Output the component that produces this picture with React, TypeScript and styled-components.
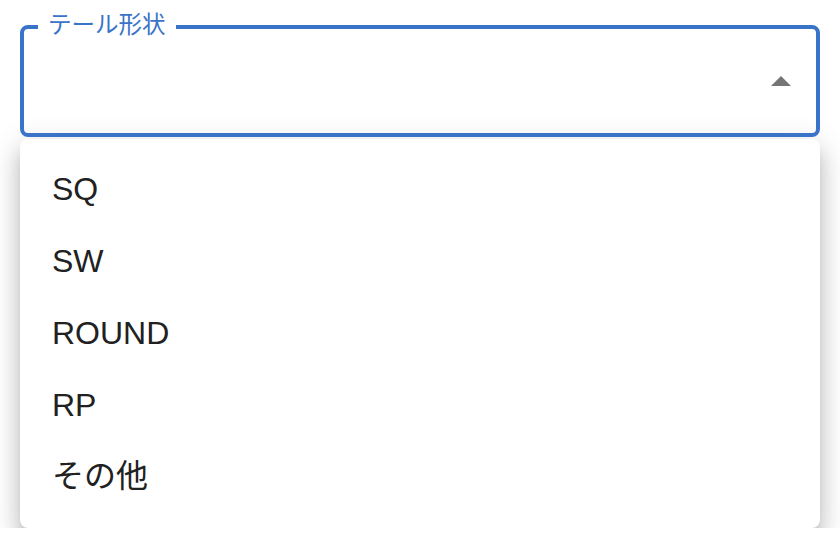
import React, { useState } from 'react';
import styled, { createGlobalStyle } from 'styled-components';

const GlobalStyle = createGlobalStyle`
  html, body {
    margin: 0;
    padding: 0;
    background: #fff;
  }
  body {
    font-family: "Liberation Sans", "Noto Sans CJK JP", sans-serif;
  }
`;

const Page = styled.div`
  padding: 25px 20px 0;
  width: 840px;
  box-sizing: border-box;
`;

const Field = styled.div`
  position: relative;
  height: 112px;
  box-sizing: border-box;
  border: 4px solid #3a74c8;
  border-radius: 8px;
  display: flex;
  align-items: center;
  justify-content: flex-end;
  padding-right: 25px;
`;

const FloatingLabel = styled.span`
  position: absolute;
  top: -18px;
  left: 14px;
  padding: 0 10px;
  background: #fff;
  color: #3a74c8;
  font-family: "Noto Sans CJK JP", "Liberation Sans", sans-serif;
  font-size: 23.5px;
  line-height: 24px;
`;

const Arrow = styled.span<{ $open: boolean }>`
  width: 0;
  height: 0;
  border-left: 10px solid transparent;
  border-right: 10px solid transparent;
  border-bottom: ${p => (p.$open ? '10px solid #757575' : 'none')};
  border-top: ${p => (p.$open ? 'none' : '10px solid #757575')};
`;

const Menu = styled.ul`
  list-style: none;
  margin: 2px 0 0;
  padding: 14px 0 15px;
  background: #fff;
  border-radius: 8px;
  box-shadow: 0 10px 10px -6px rgba(0, 0, 0, 0.22),
    0 16px 20px 2px rgba(0, 0, 0, 0.14),
    0 6px 28px 4px rgba(0, 0, 0, 0.12);
`;

const Item = styled.li<{ $jp?: boolean }>`
  height: 72px;
  line-height: ${p => (p.$jp ? '64px' : '72px')};
  padding: 0 32px;
  font-size: 32px;
  color: #212121;
  font-family: ${p =>
    p.$jp
      ? '"Noto Sans CJK JP", "Liberation Sans", sans-serif'
      : '"Liberation Sans", "Noto Sans CJK JP", sans-serif'};
  cursor: pointer;
`;

const options = ['SQ', 'SW', 'ROUND', 'RP', 'その他'];

export default function App() {
  const [open, setOpen] = useState(true);
  return (
    <Page>
      <GlobalStyle />
      <Field onClick={() => setOpen(!open)}>
        <FloatingLabel>テール形状</FloatingLabel>
        <Arrow $open={open} />
      </Field>
      {open && (
        <Menu>
          {options.map(o => (
            <Item key={o} $jp={o === 'その他'}>
              {o}
            </Item>
          ))}
        </Menu>
      )}
    </Page>
  );
}
